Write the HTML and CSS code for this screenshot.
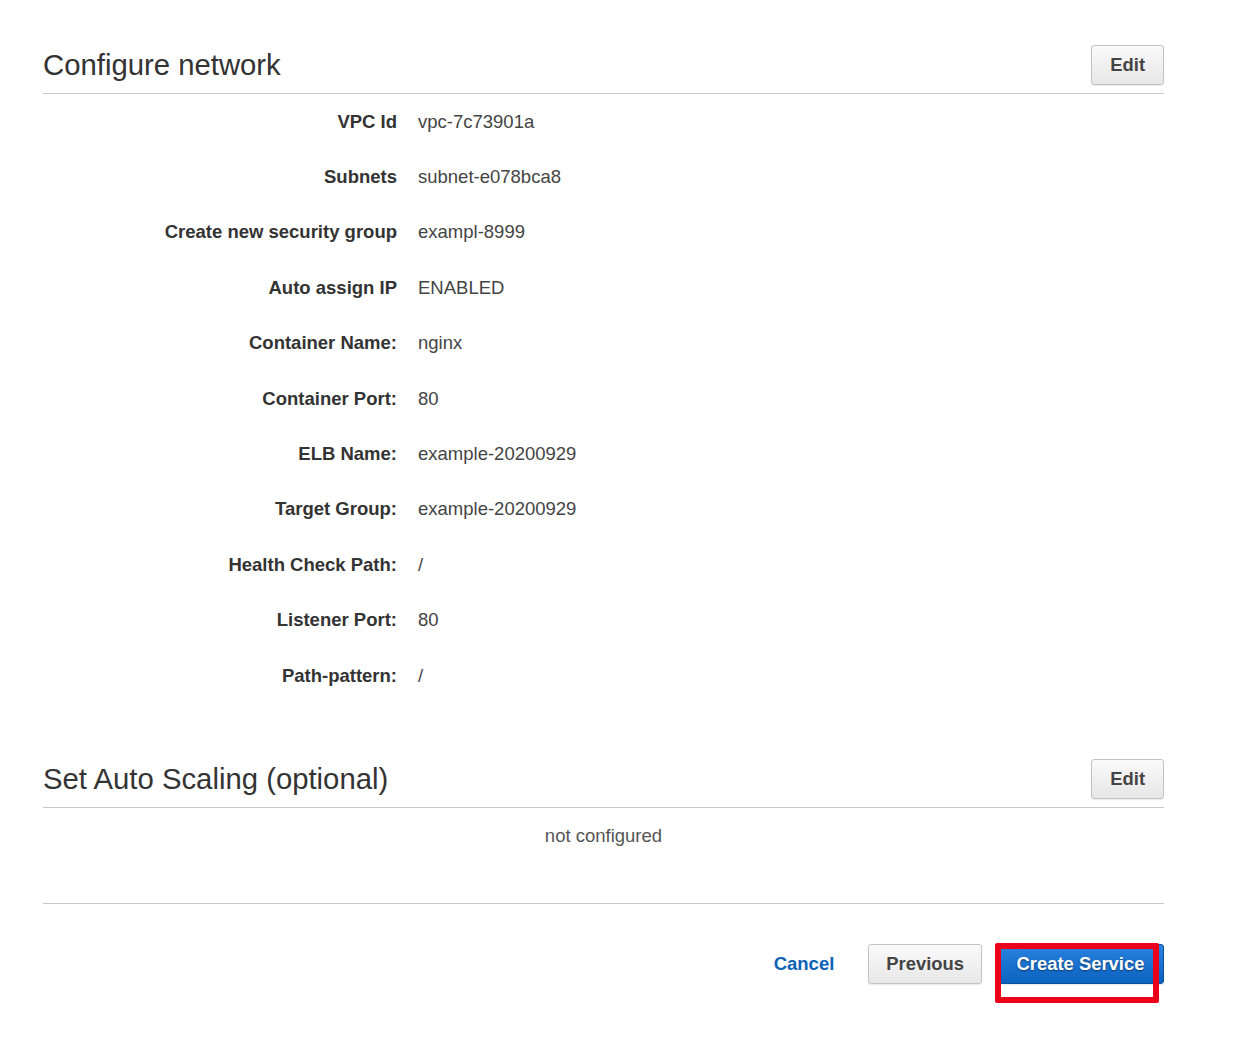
FILE: index.html
```html
<!DOCTYPE html>
<html>
<head>
<meta charset="utf-8">
<link rel="stylesheet" href="styles.css">
</head>
<body>
<div class="page">
  <section class="section">
    <div class="section-head">
      <h2 class="title">Configure network</h2>
      <button class="btn">Edit</button>
    </div>
    <div class="rows">
      <div class="row"><span class="label">VPC Id</span><span class="value">vpc-7c73901a</span></div>
      <div class="row"><span class="label">Subnets</span><span class="value">subnet-e078bca8</span></div>
      <div class="row"><span class="label">Create new security group</span><span class="value">exampl-8999</span></div>
      <div class="row"><span class="label">Auto assign IP</span><span class="value">ENABLED</span></div>
      <div class="row"><span class="label">Container Name:</span><span class="value">nginx</span></div>
      <div class="row"><span class="label">Container Port:</span><span class="value">80</span></div>
      <div class="row"><span class="label">ELB Name:</span><span class="value">example-20200929</span></div>
      <div class="row"><span class="label">Target Group:</span><span class="value">example-20200929</span></div>
      <div class="row"><span class="label">Health Check Path:</span><span class="value">/</span></div>
      <div class="row"><span class="label">Listener Port:</span><span class="value">80</span></div>
      <div class="row"><span class="label">Path-pattern:</span><span class="value">/</span></div>
    </div>
  </section>
  <section class="section section-second">
    <div class="section-head">
      <h2 class="title">Set Auto Scaling (optional)</h2>
      <button class="btn">Edit</button>
    </div>
    <div class="empty">not configured</div>
  </section>
  <div class="footer">
    <a class="cancel" href="#">Cancel</a>
    <button class="btn btn-large">Previous</button>
    <div class="primary-wrap">
      <button class="btn btn-primary">Create Service</button>
      <div class="highlight"></div>
    </div>
  </div>
</div>
</body>
</html>
```

FILE: styles.css
```css
html, body {
  margin: 0;
  padding: 0;
  background: #fff;
}
body {
  font-family: "Liberation Sans", Arial, Helvetica, sans-serif;
  color: #444;
}
.page {
  width: 1121px;
  margin-left: 43px;
  padding-bottom: 60px;
}
.section-head {
  display: flex;
  align-items: center;
  justify-content: space-between;
  padding-top: 45px;
  padding-bottom: 8px;
  border-bottom: 1px solid #c8c8c8;
}
.section-second .section-head {
  padding-top: 56px;
}
.title {
  margin: 0;
  font-size: 29.3px;
  font-weight: normal;
  color: #333;
  line-height: 36px;
}
.btn {
  font-family: "Liberation Sans", Arial, Helvetica, sans-serif;
  font-size: 18.4px;
  font-weight: bold;
  color: #444;
  height: 40px;
  padding: 0 18px;
  border: 1px solid #c2c2c2;
  border-radius: 3px;
  background: linear-gradient(#fafafa, #e7e7e7);
  box-shadow: 0 1px 1px rgba(0,0,0,0.08);
  cursor: pointer;
}
.rows {
  display: flex;
  flex-direction: column;
}
.row {
  display: grid;
  grid-template-columns: 354px 1fr;
  column-gap: 21px;
  height: 55.4px;
  align-items: center;
  font-size: 18.5px;
}
.label {
  text-align: right;
  font-weight: bold;
  color: #333;
}
.value {
  color: #444;
}
.empty {
  text-align: center;
  font-size: 18.5px;
  color: #555;
  padding-top: 18px;
  padding-bottom: 57px;
  line-height: 20px;
  border-bottom: 1px solid #c8c8c8;
}
.footer {
  display: flex;
  justify-content: flex-end;
  align-items: center;
  padding-top: 40px;
}
.cancel {
  font-size: 18.5px;
  font-weight: bold;
  color: #0b62b7;
  text-decoration: none;
  margin-right: 34px;
}
.btn-large {
  padding: 0 17px;
  margin-right: 15px;
}
.primary-wrap {
  position: relative;
  display: flex;
}
.btn-primary {
  color: #fff;
  border: 1px solid #0a4f99;
  background: linear-gradient(#2b83e0, #0b62c0);
  text-shadow: 0 1px 2px rgba(0,0,0,0.5);
  width: 167px;
  padding: 0;
}
.highlight {
  position: absolute;
  left: -2px;
  top: -1px;
  width: 152px;
  height: 48px;
  border: 6px solid #ec0019;
  border-radius: 2px;
  pointer-events: none;
}
```
